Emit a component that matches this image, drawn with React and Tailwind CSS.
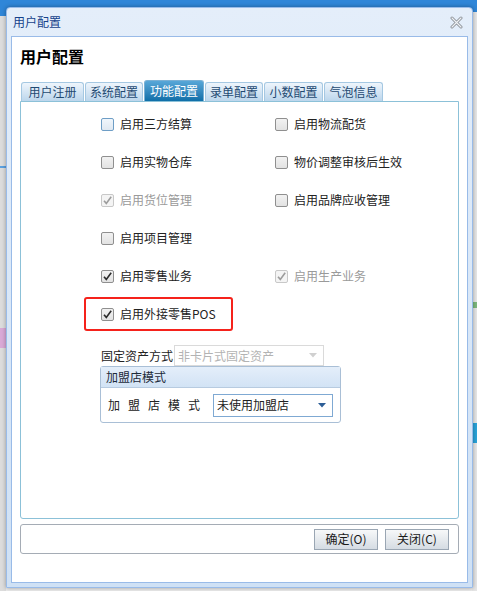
import React from "react";

const font = { fontFamily: '"Noto Sans CJK SC", "Noto Sans", sans-serif' };

const Check = ({ checked, disabled, focus }) => (
  <span
    className={`relative inline-flex h-[13px] w-[13px] shrink-0 items-center justify-center rounded-[2px] border ${
      disabled
        ? "border-[#c8c8c8] bg-[#f4f4f4]"
        : focus
        ? "border-[#6e9ec6] bg-gradient-to-b from-[#f0f6fc] to-[#dfe8f1]"
        : "border-[#8f8f8f] bg-gradient-to-b from-[#f2f2f2] to-[#e2e2e2]"
    }`}
  >
    {checked && (
      <svg width="11" height="11" viewBox="0 0 11 11">
        <path
          d="M2 5.8 L4.3 8.4 L9.2 1.8"
          fill="none"
          stroke={disabled ? "#9c9c9c" : "#2b2b2b"}
          strokeWidth="1.6"
        />
      </svg>
    )}
  </span>
);

const Item = ({ label, checked, disabled, focus }) => (
  <div className="flex items-center gap-[6px] whitespace-nowrap">
    <Check checked={checked} disabled={disabled} focus={focus} />
    <span className={`text-[12px] ${disabled ? "text-[#9a9a9a]" : "text-[#222]"}`}>{label}</span>
  </div>
);

const Arrow = ({ color }) => (
  <svg width="8" height="5" viewBox="0 0 8 5">
    <path d="M0 0 L8 0 L4 4.5 Z" fill={color} />
  </svg>
);

const tabs = [
  ["用户注册", "w-[63px]"],
  ["系统配置", "w-[58px]"],
  ["功能配置", "w-[60px]"],
  ["录单配置", "w-[58px]"],
  ["小数配置", "w-[59px]"],
  ["气泡信息", "w-[59px]"],
];

export default function App() {
  return (
    <div className="relative h-[591px] w-[477px] overflow-hidden bg-[#ececec]" style={font}>
      {/* desktop behind */}
      <div className="h-[12px] bg-[#2f86d8]" />
      <div className="flex h-[579px] justify-between">
        <div className="flex w-[6px] flex-col bg-[#dcdcdc]">
          <div className="h-[4px] bg-[#2f86d8]" />
          <div className="mt-[150px] h-[2px] bg-[#5aa0e0]" />
          <div className="mt-[160px] h-[20px] bg-[#d9a9d6]" />
        </div>
        <div className="flex w-[5px] flex-col bg-[#e6e6e6]">
          <div className="mt-[290px] h-[6px] bg-[#7db87d]" />
          <div className="mt-[115px] h-[20px] bg-[#29a3d9]" />
        </div>
      </div>

      {/* window */}
      <div className="absolute left-[6px] top-[7px] flex h-[581px] w-[467px] flex-col rounded-t-[4px] border border-[#99bbe8] bg-gradient-to-b from-[#e4eefa] to-[#cfe1f5] shadow-[0_0_4px_rgba(0,0,0,0.35)]">
        <div className="flex h-[28px] items-center justify-between px-[6px]">
          <span className="text-[12px] text-[#15428b]">用户配置</span>
          <svg width="13" height="13" viewBox="0 0 13 13" className="mr-[3px]">
            <path d="M2 2 L11 11 M11 2 L2 11" stroke="#8a8f96" strokeWidth="3" strokeLinecap="round" />
            <path d="M2 2 L11 11 M11 2 L2 11" stroke="#eef1f4" strokeWidth="1.2" strokeLinecap="round" />
          </svg>
        </div>

        <div className="mx-[4px] mb-[4px] flex flex-1 flex-col border border-[#99bbe8] bg-white px-[8px]">
          <h1 className="mt-[9px] text-[16px] font-bold leading-[20px] text-black">用户配置</h1>

          {/* tabs */}
          <div className="mt-[14px] flex items-end pl-[1px]">
            {tabs.map(([t, w]) =>
              t === "功能配置" ? (
                <div
                  key={t}
                  className={`mr-[1px] flex h-[21px] ${w} items-center justify-center rounded-t-[3px] border border-b-0 border-[#7ab0d4] bg-gradient-to-b from-[#57a7d8] to-[#0d6fa8] text-[12px] text-white`}
                >
                  {t}
                </div>
              ) : (
                <div
                  key={t}
                  className={`mr-[1px] flex h-[19px] ${w} items-center justify-center rounded-t-[3px] border border-b-0 border-[#a5c8e2] bg-gradient-to-b from-[#eef5fc] to-[#bcd6ec] text-[12px] text-[#1f4a72]`}
                >
                  {t}
                </div>
              )
            )}
          </div>

          {/* panel */}
          <div className="flex h-[418px] flex-col rounded-b-[3px] border border-[#8cc1d8] pt-[3px]">
            <div className="grid grid-cols-[174px_1fr] pl-[80px]">
              {[
                ["启用三方结算", false, false, true, "启用物流配货", false, false],
                ["启用实物仓库", false, false, false, "物价调整审核后生效", false, false],
                ["启用货位管理", true, true, false, "启用品牌应收管理", false, false],
                ["启用项目管理", false, false, false, null],
                ["启用零售业务", true, false, false, "启用生产业务", true, true],
              ].map((r, i) => (
                <React.Fragment key={i}>
                  <div className="flex h-[38px] items-center">
                    <Item label={r[0]} checked={r[1]} disabled={r[2]} focus={r[3]} />
                  </div>
                  <div className="flex h-[38px] items-center">
                    {r[4] && <Item label={r[4]} checked={r[5]} disabled={r[6]} />}
                  </div>
                </React.Fragment>
              ))}
            </div>

            <div className="ml-[63px] mt-[2px] flex h-[34px] w-[149px] items-center rounded-[3px] border-[2.5px] border-[#f5221b] pl-[15px]">
              <Item label="启用外接零售POS" checked />
            </div>

            <div className="ml-[80px] mt-[14px] flex items-center">
              <span className="w-[73px] text-[12px] text-[#222]">固定资产方式</span>
              <div className="flex h-[21px] w-[150px] items-center justify-between border border-[#dadada] pl-[3px] pr-[6px]">
                <span className="text-[12px] text-[#b3b3b3]">非卡片式固定资产</span>
                <Arrow color="#d0d0d0" />
              </div>
            </div>

            <div className="ml-[79px] w-[241px] rounded-[3px] border border-[#a9bfd6]">
              <div className="flex h-[21px] items-center border-b border-[#b7cbe0] bg-gradient-to-b from-[#e4eefa] to-[#d2e3f5] pl-[5px] text-[12px] text-[#1c2a3a]">
                加盟店模式
              </div>
              <div className="flex h-[34px] items-center pl-[7px]">
                <span className="w-[105px] text-[12px] tracking-[8px] text-[#222]">加盟店模式</span>
                <div className="flex h-[23px] w-[120px] items-center justify-between border border-[#7fa9d3] pl-[3px] pr-[6px]">
                  <span className="text-[12px] text-[#222]">未使用加盟店</span>
                  <Arrow color="#2d5e97" />
                </div>
              </div>
            </div>
          </div>

          {/* toolbar */}
          <div className="mt-[5px] flex h-[30px] items-center justify-end gap-[7px] rounded-[3px] border border-[#a5acb5] pr-[9px]">
            {["确定(O)", "关闭(C)"].map((b) => (
              <button
                key={b}
                className="flex h-[21px] w-[64px] items-center justify-center border border-[#9aa6b3] bg-gradient-to-b from-[#f7f8f9] to-[#d5dce3] text-[12px] text-[#1a1a1a]"
              >
                {b}
              </button>
            ))}
          </div>
        </div>
      </div>
    </div>
  );
}
